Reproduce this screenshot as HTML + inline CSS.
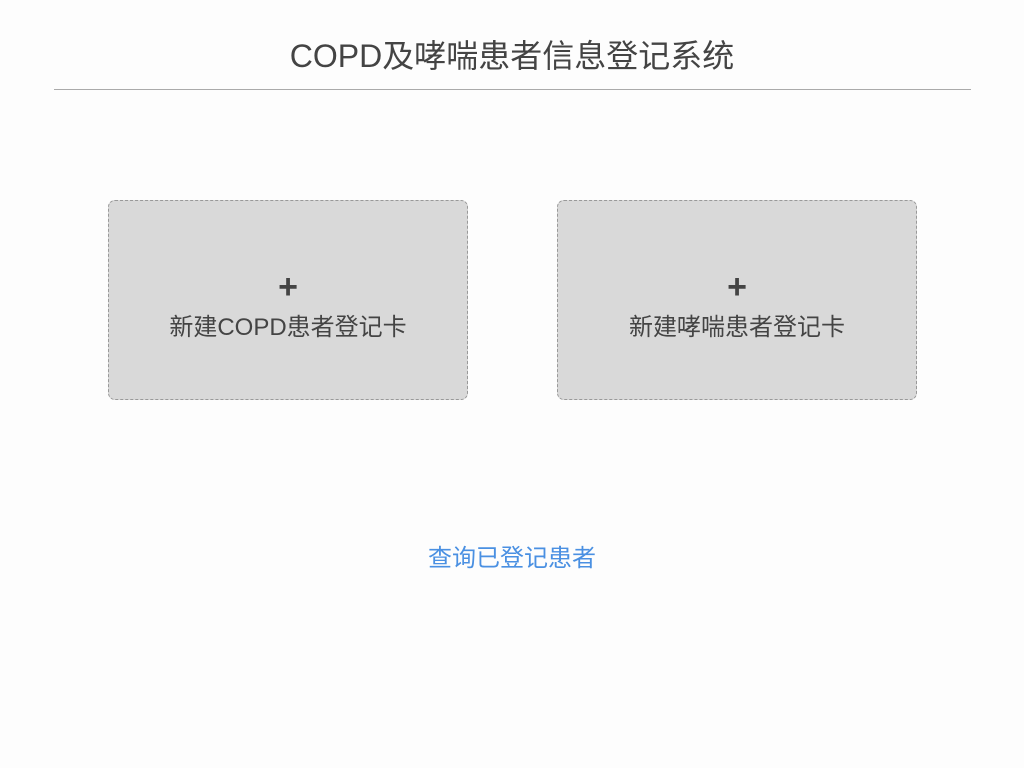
<!DOCTYPE html>
<html><head><meta charset="utf-8"><style>
html,body{margin:0;padding:0;background:#fdfdfd;width:1024px;height:768px;overflow:hidden;font-family:"Liberation Sans","Noto Sans CJK SC",sans-serif;}
.title{position:absolute;left:0;width:1024px;top:36px;text-align:center;font-size:32px;line-height:40px;color:#444;}
.line{position:absolute;left:54px;width:917px;top:89px;height:1px;background:#aaa;}
.card{position:absolute;top:200px;width:358px;height:198px;background:#d9d9d9;border:1px dashed #999;border-radius:7px;text-align:center;color:#444;}
.plus{position:absolute;left:0;right:0;top:66px;font-size:34px;line-height:40px;font-weight:bold;}
.lbl{position:absolute;left:0;right:0;top:112px;font-size:24px;line-height:30px;}
.link{position:absolute;left:0;width:1024px;top:544px;text-align:center;font-size:24px;line-height:30px;color:#4a90e2;}
</style></head><body>
<div class="title">COPD及哮喘患者信息登记系统</div>
<div class="line"></div>
<div class="card" style="left:108px"><div class="plus">+</div><div class="lbl">新建COPD患者登记卡</div></div>
<div class="card" style="left:557px"><div class="plus">+</div><div class="lbl">新建哮喘患者登记卡</div></div>
<div class="link">查询已登记患者</div>
</body></html>
